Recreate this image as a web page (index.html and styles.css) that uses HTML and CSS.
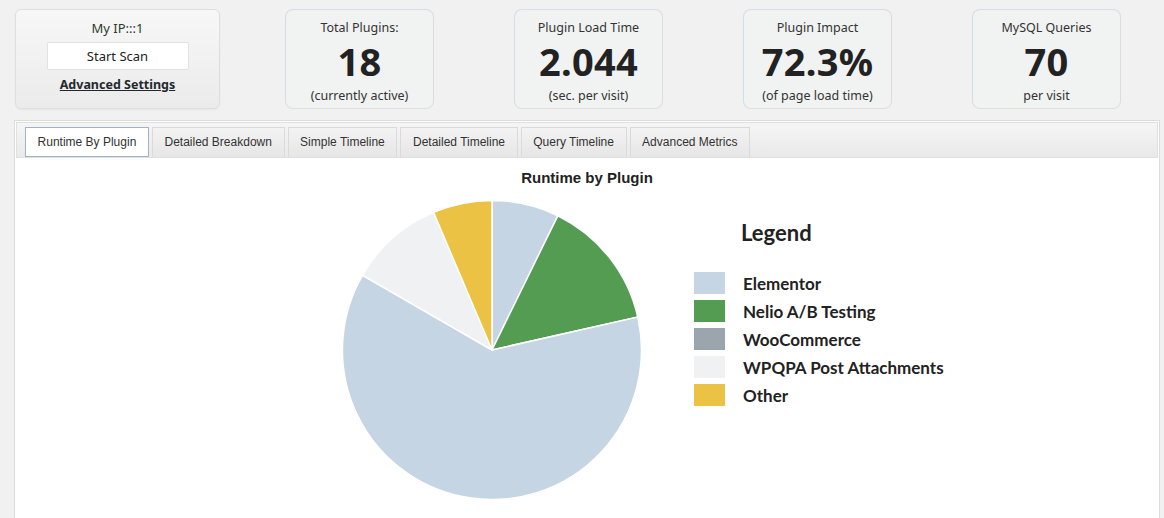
FILE: index.html
```html
<!DOCTYPE html>
<html>
<head>
<meta charset="utf-8">
<link rel="stylesheet" href="styles.css">
</head>
<body>
<div class="top">
  <div class="scanbox">
    <div class="ip">My IP:::1</div>
    <button class="scanbtn">Start Scan</button>
    <a class="adv" href="#">Advanced Settings</a>
  </div>
  <div class="stats">
    <div class="stat">
      <div class="label">Total Plugins:</div>
      <div class="num">18</div>
      <div class="sub">(currently active)</div>
    </div>
    <div class="stat">
      <div class="label">Plugin Load Time</div>
      <div class="num">2.044</div>
      <div class="sub">(sec. per visit)</div>
    </div>
    <div class="stat">
      <div class="label">Plugin Impact</div>
      <div class="num">72.3%</div>
      <div class="sub">(of page load time)</div>
    </div>
    <div class="stat">
      <div class="label">MySQL Queries</div>
      <div class="num">70</div>
      <div class="sub">per visit</div>
    </div>
  </div>
</div>

<div class="panel">
  <div class="tabbar">
    <div class="tab active">Runtime By Plugin</div>
    <div class="tab">Detailed Breakdown</div>
    <div class="tab">Simple Timeline</div>
    <div class="tab">Detailed Timeline</div>
    <div class="tab">Query Timeline</div>
    <div class="tab">Advanced Metrics</div>
  </div>
  <div class="content">
    <div class="title">Runtime by Plugin</div>
    <div class="chartrow">
      <svg class="pie" width="302" height="302" viewBox="0 0 302 302">
        <circle cx="151" cy="151" r="150" fill="#e6e9ec"/>
        <path d="M151,151 L151,1.5 A149.5,149.5 0 0 1 216.8,16.8 Z" fill="#c5d5e4" stroke="#fff" stroke-width="1.5"/>
        <path d="M151,151 L216.8,16.8 A149.5,149.5 0 0 1 296.8,118.1 Z" fill="#539c51" stroke="#fff" stroke-width="1.5"/>
        <path d="M151,151 L296.8,118.1 A149.5,149.5 0 1 1 21.5,76.25 Z" fill="#c5d5e4" stroke="#fff" stroke-width="1.5"/>
        <path d="M151,151 L21.5,76.25 A149.5,149.5 0 0 1 92.6,13.4 Z" fill="#eff1f2" stroke="#fff" stroke-width="1.5"/>
        <path d="M151,151 L92.6,13.4 A149.5,149.5 0 0 1 151,1.5 Z" fill="#ebc244" stroke="#fff" stroke-width="1.5"/>
      </svg>
      <div class="legend">
        <div class="legend-title">Legend</div>
        <div class="items">
          <div class="item"><span class="sw sw-el"></span><span>Elementor</span></div>
          <div class="item"><span class="sw sw-ne"></span><span>Nelio A/B Testing</span></div>
          <div class="item"><span class="sw sw-wo"></span><span>WooCommerce</span></div>
          <div class="item"><span class="sw sw-wp"></span><span>WPQPA Post Attachments</span></div>
          <div class="item"><span class="sw sw-ot"></span><span>Other</span></div>
        </div>
      </div>
    </div>
  </div>
</div>
</body>
</html>
```

FILE: styles.css
```css
html, body {
  margin: 0;
  padding: 0;
  background: #f1f1f1;
  overflow: hidden;
}
body {
  font-family: "Noto Sans", "Open Sans", sans-serif;
  color: #333;
  width: 1164px;
  height: 518px;
}
.top {
  display: flex;
  padding: 9px 0 0 15px;
  height: 100px;
}
.scanbox {
  width: 203px;
  height: 98px;
  border: 1px solid #dedede;
  border-radius: 6px;
  background: linear-gradient(#f7f7f7, #ebebeb);
  box-shadow: 0 1px 2px rgba(0,0,0,0.05);
  display: flex;
  flex-direction: column;
  align-items: center;
  margin-right: 65px;
}
.ip {
  font-size: 13px;
  color: #2c3a2c;
  margin-top: 9px;
  line-height: 18px;
}
.scanbtn {
  margin-top: 5px;
  width: 142px;
  height: 28px;
  background: #fff;
  border: 1px solid #e2e2e2;
  border-radius: 2px;
  font-family: "Noto Sans", sans-serif;
  font-size: 13px;
  color: #222;
  padding: 0;
}
.adv {
  margin-top: 6px;
  font-size: 12.5px;
  font-weight: 700;
  color: #23282d;
  text-decoration: underline;
  line-height: 18px;
}
.stats {
  display: flex;
  gap: 80px;
}
.stat {
  width: 147px;
  height: 98px;
  border: 1px solid #d2dde7;
  border-bottom-color: #dedede;
  border-right-color: #dcdcdc;
  border-radius: 8px;
  background: #f1f2f2;
  display: flex;
  flex-direction: column;
  align-items: center;
}
.label {
  font-size: 12.5px;
  color: #333;
  margin-top: 9px;
  line-height: 18px;
}
.num {
  font-size: 38px;
  font-weight: 700;
  color: #222;
  line-height: 40px;
  margin-top: 4px;
  letter-spacing: 0.3px;
}
.sub {
  font-size: 12.5px;
  color: #333;
  line-height: 18px;
  margin-top: 6px;
}
.panel {
  margin: 11px 0 0 14px;
  width: 1142px;
  height: 420px;
  border: 1px solid #dcdcdc;
  background: #fff;
  padding: 1px;
}
.tabbar {
  display: flex;
  gap: 3px;
  padding: 4px 0 0 8px;
  box-sizing: border-box;
  height: 36px;
  background: linear-gradient(#f5f5f5, #e9e9e9);
  border: 1px solid #e0e0e0;
  align-items: flex-end;
}
.tab {
  font-family: "Liberation Sans", Arial, sans-serif;
  font-size: 12px;
  color: #333;
  height: 30px;
  box-sizing: border-box;
  padding: 0 11.6px 1px;
  display: flex;
  align-items: center;
  background: linear-gradient(#f3f3f3, #e6e6e6);
  border: 1px solid #dadada;
  border-bottom: none;
}
.tab.active {
  background: #fff;
  border: 1px solid #9fb3c6;
}
.content {
  background: #fff;
}
.title {
  font-family: "Liberation Sans", Arial, sans-serif;
  font-size: 15px;
  font-weight: 700;
  color: #222;
  text-align: center;
  margin-top: 11px;
  line-height: 18px;
}
.chartrow {
  display: flex;
  margin-top: 12px;
  padding-left: 325px;
}
.pie {
  display: block;
}
.legend {
  margin-left: 51px;
  padding-top: 20px;
  font-family: "Lato", sans-serif;
  font-weight: 700;
  color: #222;
}
.legend-title {
  font-size: 22px;
  line-height: 28px;
  margin-left: 47px;
}
.items {
  margin-top: 22px;
  display: flex;
  flex-direction: column;
}
.item {
  display: flex;
  align-items: center;
  font-size: 17px;
  height: 28px;
}
.sw {
  width: 31px;
  height: 22px;
  margin-right: 18px;
  display: inline-block;
}
.sw-el { background: #c5d5e4; }
.sw-ne { background: #539c51; }
.sw-wo { background: #9aa5ad; }
.sw-wp { background: #eff1f2; }
.sw-ot { background: #ebc244; }
```
